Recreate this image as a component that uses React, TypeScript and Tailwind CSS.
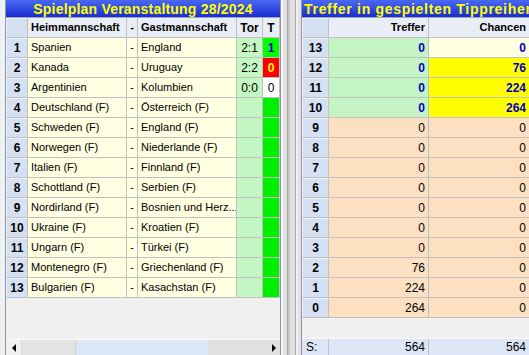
import React from "react";

const font = { fontFamily: '"Liberation Sans", Arial, sans-serif' };

const matches = [
  { heim: "Spanien", gast: "England", tor: "2:1", t: "1", kind: "win" },
  { heim: "Kanada", gast: "Uruguay", tor: "2:2", t: "0", kind: "lose" },
  { heim: "Argentinien", gast: "Kolumbien", tor: "0:0", t: "0", kind: "open" },
  { heim: "Deutschland (F)", gast: "Österreich (F)", tor: "", t: "", kind: "empty" },
  { heim: "Schweden (F)", gast: "England (F)", tor: "", t: "", kind: "empty" },
  { heim: "Norwegen (F)", gast: "Niederlande (F)", tor: "", t: "", kind: "empty" },
  { heim: "Italien (F)", gast: "Finnland (F)", tor: "", t: "", kind: "empty" },
  { heim: "Schottland (F)", gast: "Serbien (F)", tor: "", t: "", kind: "empty" },
  { heim: "Nordirland (F)", gast: "Bosnien und Herz...", tor: "", t: "", kind: "empty" },
  { heim: "Ukraine (F)", gast: "Kroatien (F)", tor: "", t: "", kind: "empty" },
  { heim: "Ungarn (F)", gast: "Türkei (F)", tor: "", t: "", kind: "empty" },
  { heim: "Montenegro (F)", gast: "Griechenland (F)", tor: "", t: "", kind: "empty" },
  { heim: "Bulgarien (F)", gast: "Kasachstan (F)", tor: "", t: "", kind: "empty" },
];

const hits = [
  { n: 13, treffer: "0", chancen: "0", top: true, chancenBg: "bg-[#ffffe1]" },
  { n: 12, treffer: "0", chancen: "76", top: true, chancenBg: "bg-[#ffff00]" },
  { n: 11, treffer: "0", chancen: "224", top: true, chancenBg: "bg-[#ffff00]" },
  { n: 10, treffer: "0", chancen: "264", top: true, chancenBg: "bg-[#ffff00]" },
  { n: 9, treffer: "0", chancen: "0" },
  { n: 8, treffer: "0", chancen: "0" },
  { n: 7, treffer: "0", chancen: "0" },
  { n: 6, treffer: "0", chancen: "0" },
  { n: 5, treffer: "0", chancen: "0" },
  { n: 4, treffer: "0", chancen: "0" },
  { n: 3, treffer: "0", chancen: "0" },
  { n: 2, treffer: "76", chancen: "0" },
  { n: 1, treffer: "224", chancen: "0" },
  { n: 0, treffer: "264", chancen: "0" },
];

const cell = "border-r border-b border-[#c0c0c0] h-[20px] flex items-center whitespace-nowrap overflow-hidden";
const rowHead = "bg-[#d5e0f3] font-bold text-[12px] justify-center border-t border-l border-t-[#eef3fb] border-l-[#eef3fb]";
const header = "bg-[#e9eef6] font-bold text-[11px]";

const TitleBar = ({ text, center }: { text: string; center?: boolean }) => (
  <div
    className={`h-[18px] bg-gradient-to-b from-[#4a68f2] to-[#1c2ad0] text-[#ffff00] font-bold text-[14px] leading-[18px] whitespace-nowrap overflow-hidden border-b border-[#a0a8c0] ${
      center ? "text-center tracking-[0.2px]" : "pl-[2px] tracking-[0.7px]"
    }`}
  >
    {text}
  </div>
);

const tCell = (kind: string, t: string) => {
  if (kind === "win") return <div className={`${cell} bg-[#00ff00] justify-center font-bold text-[12px] text-[#0000c0]`}>{t}</div>;
  if (kind === "lose") return <div className={`${cell} bg-[#ff0000] justify-center font-bold text-[12px] text-[#ffff00]`}>{t}</div>;
  if (kind === "open") return <div className={`${cell} bg-white justify-center text-[12px]`}>{t}</div>;
  return <div className={`${cell} bg-[#00ee00]`} />;
};

const Splitter = () => (
  <div className="w-[20px] h-full flex bg-[#e2e2e2]">
    <div className="w-[2px] bg-[#f4f4f4]" />
    <div className="w-[5px] border-r border-[#a8a8a8]" />
    <div className="w-[2px] bg-[#c8c8c8]" />
    <div className="w-[6px] border-r border-[#a8a8a8]" />
    <div className="w-[2px] bg-[#f0f0f0]" />
  </div>
);

export default function App() {
  return (
    <div className="w-[529px] h-[355px] overflow-hidden flex bg-[#f0f0f0] text-black" style={font}>
      {/* left margin */}
      <div className="w-[5px] h-full bg-[#eef0f4]" />

      {/* Spielplan */}
      <div className="w-[276px] h-full flex flex-col border-l border-r border-[#8c96a8] bg-[#f0f0f0]">
        <TitleBar text="Spielplan Veranstaltung 28/2024" center />
        <div className="grid grid-cols-[22px_99px_11px_99px_26px_17px] text-[11px]">
          <div className={`${cell} ${rowHead}`} />
          <div className={`${cell} ${header} pl-[3px]`}>Heimmannschaft</div>
          <div className={`${cell} ${header} justify-center`}>-</div>
          <div className={`${cell} ${header} pl-[3px]`}>Gastmannschaft</div>
          <div className={`${cell} ${header} justify-center text-[12px]`}>Tor</div>
          <div className={`${cell} ${header} justify-center text-[12px]`}>T</div>
          {matches.map((m, i) => (
            <React.Fragment key={i}>
              <div className={`${cell} ${rowHead}`}>{i + 1}</div>
              <div className={`${cell} bg-[#ffffe1] pl-[3px]`}>{m.heim}</div>
              <div className={`${cell} bg-[#ffffe1] justify-center`}>-</div>
              <div className={`${cell} bg-[#ffffe1] pl-[3px]`}>{m.gast}</div>
              <div className={`${cell} bg-[#c4f7c4] justify-center text-[12px]`}>{m.tor}</div>
              {tCell(m.kind, m.t)}
            </React.Fragment>
          ))}
        </div>
        <div className="flex-1" />
        {/* scrollbar */}
        <div className="h-[16px] flex border-t border-[#fafafa]">
          <div className="w-[16px] bg-[#f0f0f0] flex items-center justify-center border-r border-[#d8d8d8]">
            <div className="w-0 h-0 border-y-[4px] border-y-transparent border-r-[4px] border-r-black" />
          </div>
          <div className="w-[54px] bg-[#e3e3e3] border-r border-[#d0d0d0]" />
          <div className="w-[132px] bg-[#dce7f7]" />
          <div className="flex-1 bg-[#e0e0e0]" />
          <div className="w-[12px] bg-[#e0e0e0] flex items-center justify-center">
            <div className="w-0 h-0 border-y-[4px] border-y-transparent border-l-[4px] border-l-black" />
          </div>
        </div>
      </div>

      <Splitter />

      {/* Treffer */}
      <div className="flex-1 h-full flex flex-col border-l border-[#8c96a8] bg-[#f0f0f0] overflow-hidden">
        <TitleBar text="Treffer in gespielten Tippreihen" />
        <div className="grid grid-cols-[27px_100px_101px] text-[12px]">
          <div className={`${cell} ${rowHead}`} />
          <div className={`${cell} ${header} justify-end pr-[3px] text-[11px]`}>Treffer</div>
          <div className={`${cell} ${header} justify-end pr-[3px] text-[11px]`}>Chancen</div>
          {hits.map((h) => (
            <React.Fragment key={h.n}>
              <div className={`${cell} ${rowHead}`}>{h.n}</div>
              {h.top ? (
                <>
                  <div className={`${cell} bg-[#c4f3c4] justify-end pr-[3px] font-bold text-[#0000c0]`}>{h.treffer}</div>
                  <div className={`${cell} ${h.chancenBg} justify-end pr-[3px] font-bold text-[#0000c0]`}>{h.chancen}</div>
                </>
              ) : (
                <>
                  <div className={`${cell} bg-[#fde0c2] justify-end pr-[3px]`}>{h.treffer}</div>
                  <div className={`${cell} bg-[#fde0c2] justify-end pr-[3px]`}>{h.chancen}</div>
                </>
              )}
            </React.Fragment>
          ))}
        </div>
        <div className="flex-1" />
        <div className="grid grid-cols-[27px_100px_101px] text-[12px] border-t border-[#fafafa]">
          <div className="h-[16px] flex items-center pl-[4px] bg-[#dce6f6] border-r border-[#c0c0c0]">S:</div>
          <div className="h-[16px] flex items-center justify-end pr-[3px] bg-[#dce6f6] border-r border-[#c0c0c0]">564</div>
          <div className="h-[16px] flex items-center justify-end pr-[3px] bg-[#dce6f6] border-r border-[#c0c0c0]">564</div>
        </div>
      </div>
    </div>
  );
}
